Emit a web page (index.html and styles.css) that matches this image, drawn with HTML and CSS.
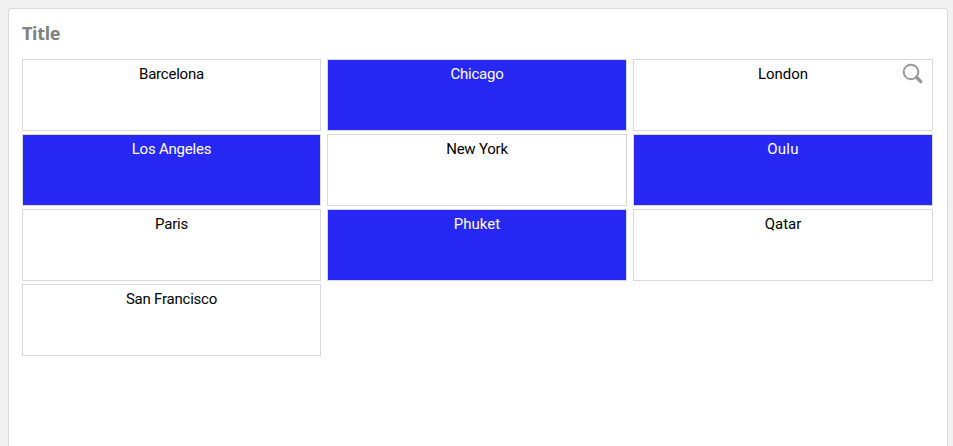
FILE: index.html
```html
<!DOCTYPE html>
<html lang="en">
<head>
<meta charset="utf-8">
<title>Title</title>
<link rel="stylesheet" href="styles.css">
</head>
<body>
<main class="card">
  <h1 class="title">Title</h1>
  <div class="grid">
    <div class="cell tight">Barcelona</div>
    <div class="cell selected tight">Chicago</div>
    <div class="cell">London
      <svg class="search" viewBox="0 0 22 22"><circle cx="9" cy="8" r="7.300"/><path d="M14.400 13.200l4.400 4.400"/></svg>
    </div>
    <div class="cell selected tight">Los Angeles</div>
    <div class="cell tight">New York</div>
    <div class="cell selected loose">Oulu</div>
    <div class="cell tight">Paris</div>
    <div class="cell selected">Phuket</div>
    <div class="cell">Qatar</div>
    <div class="cell tight">San Francisco</div>
  </div>
</main>
</body>
</html>
```

FILE: styles.css
```css
* { box-sizing: border-box; }
body {
  margin: 0;
  height: 446px;
  overflow: hidden;
  padding: 8px 5px 0 8px;
  background: #f1f1f1;
  font-family: "Roboto", sans-serif;
}
.card {
  height: 460px;
  padding: 0 13px;
  border: 1px solid #d9d9d9;
  border-radius: 3px;
  background: #fff;
}
.title {
  margin: 0;
  height: 50px;
  line-height: 49px;
  font-family: "Noto Sans", sans-serif;
  font-size: 18px;
  font-weight: 700;
  letter-spacing: -0.3px;
  color: #808080;
}
.grid {
  display: grid;
  grid-template-columns: 299px 300px 300px;
  grid-auto-rows: 72px;
  gap: 3px 6px;
}
.cell {
  position: relative;
  border: 1px solid #d9d9d9;
  text-align: center;
  font-size: 15px;
  line-height: 28px;
  color: #000;
}
.tight { letter-spacing: -0.22px; }
.loose { letter-spacing: 0.3px; }
.selected { background: #2828f5; color: #fff; }
.search {
  position: absolute;
  top: 4px;
  right: 8px;
  width: 22px;
  height: 22px;
  overflow: visible;
  fill: none;
  stroke: #999;
  stroke-width: 2;
}
.search path { stroke-width: 3.4; stroke-linecap: round; }
```
